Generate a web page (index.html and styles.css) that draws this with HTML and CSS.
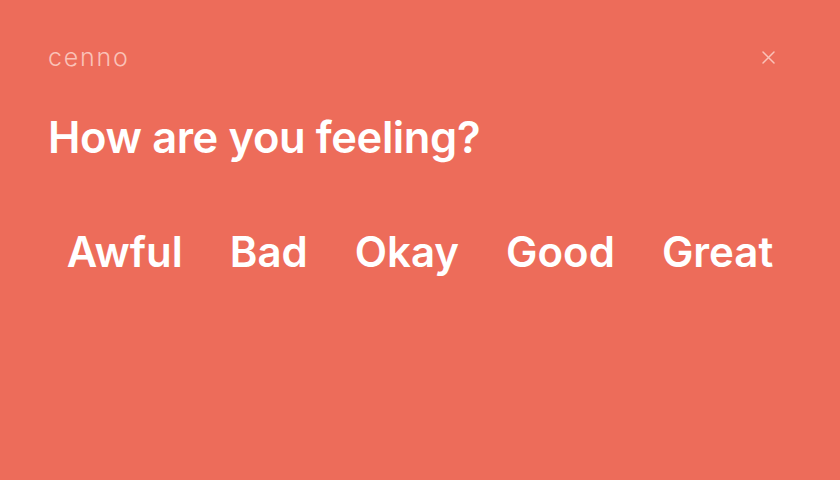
FILE: index.html
```html
<!DOCTYPE html>
<html lang="en">
<head>
    <meta charset="UTF-8">
    <meta name="viewport" content="width=device-width, initial-scale=1.0">
    <title>cenno</title>
    <link rel="stylesheet" href="styles.css">
</head>
<body>
    <div class="panel">
        <header class="top">
            <span class="brand">cenno</span>
            <button class="close" type="button" aria-label="Close">
                <svg width="13" height="13" viewBox="0 0 13 13">
                    <path d="M1 1L12 12M12 1L1 12" stroke="currentColor" stroke-width="1.5" stroke-linecap="round"/>
                </svg>
            </button>
        </header>

        <h1 class="question">How are you feeling?</h1>

        <div class="moods">
            <button class="mood" type="button">Awful</button>
            <button class="mood" type="button">Bad</button>
            <button class="mood" type="button">Okay</button>
            <button class="mood" type="button">Good</button>
            <button class="mood" type="button">Great</button>
        </div>
    </div>
</body>
</html>
```

FILE: styles.css
```css
html, body {
    margin: 0;
    height: 100%;
}
body {
    background: #ed6c5a;
    font-family: Inter, "Noto Sans", sans-serif;
    color: #fff;
}
.panel {
    padding: 40px 48px;
}
.top {
    display: flex;
    justify-content: space-between;
    align-items: center;
    height: 34px;
}
.brand {
    font-size: 25px;
    font-weight: 300;
    letter-spacing: 1.8px;
    color: #fac2b8;
}
.close {
    background: none;
    border: 0;
    padding: 0;
    margin-right: 17px;
    color: #fac2b8;
    display: flex;
}
.question {
    margin: 37px 0 0;
    font-size: 43.5px;
    font-weight: 600;
    letter-spacing: -0.4px;
}
/* row of answers, centred with a fixed gap */
.moods {
    display: flex;
    justify-content: center;
    gap: 47px;
    margin-top: 63px;
}
.mood {
    background: none;
    border: 0;
    padding: 0;
    font-family: inherit;
    font-size: 42px;
    font-weight: 600;
    color: #fff;
}
```
